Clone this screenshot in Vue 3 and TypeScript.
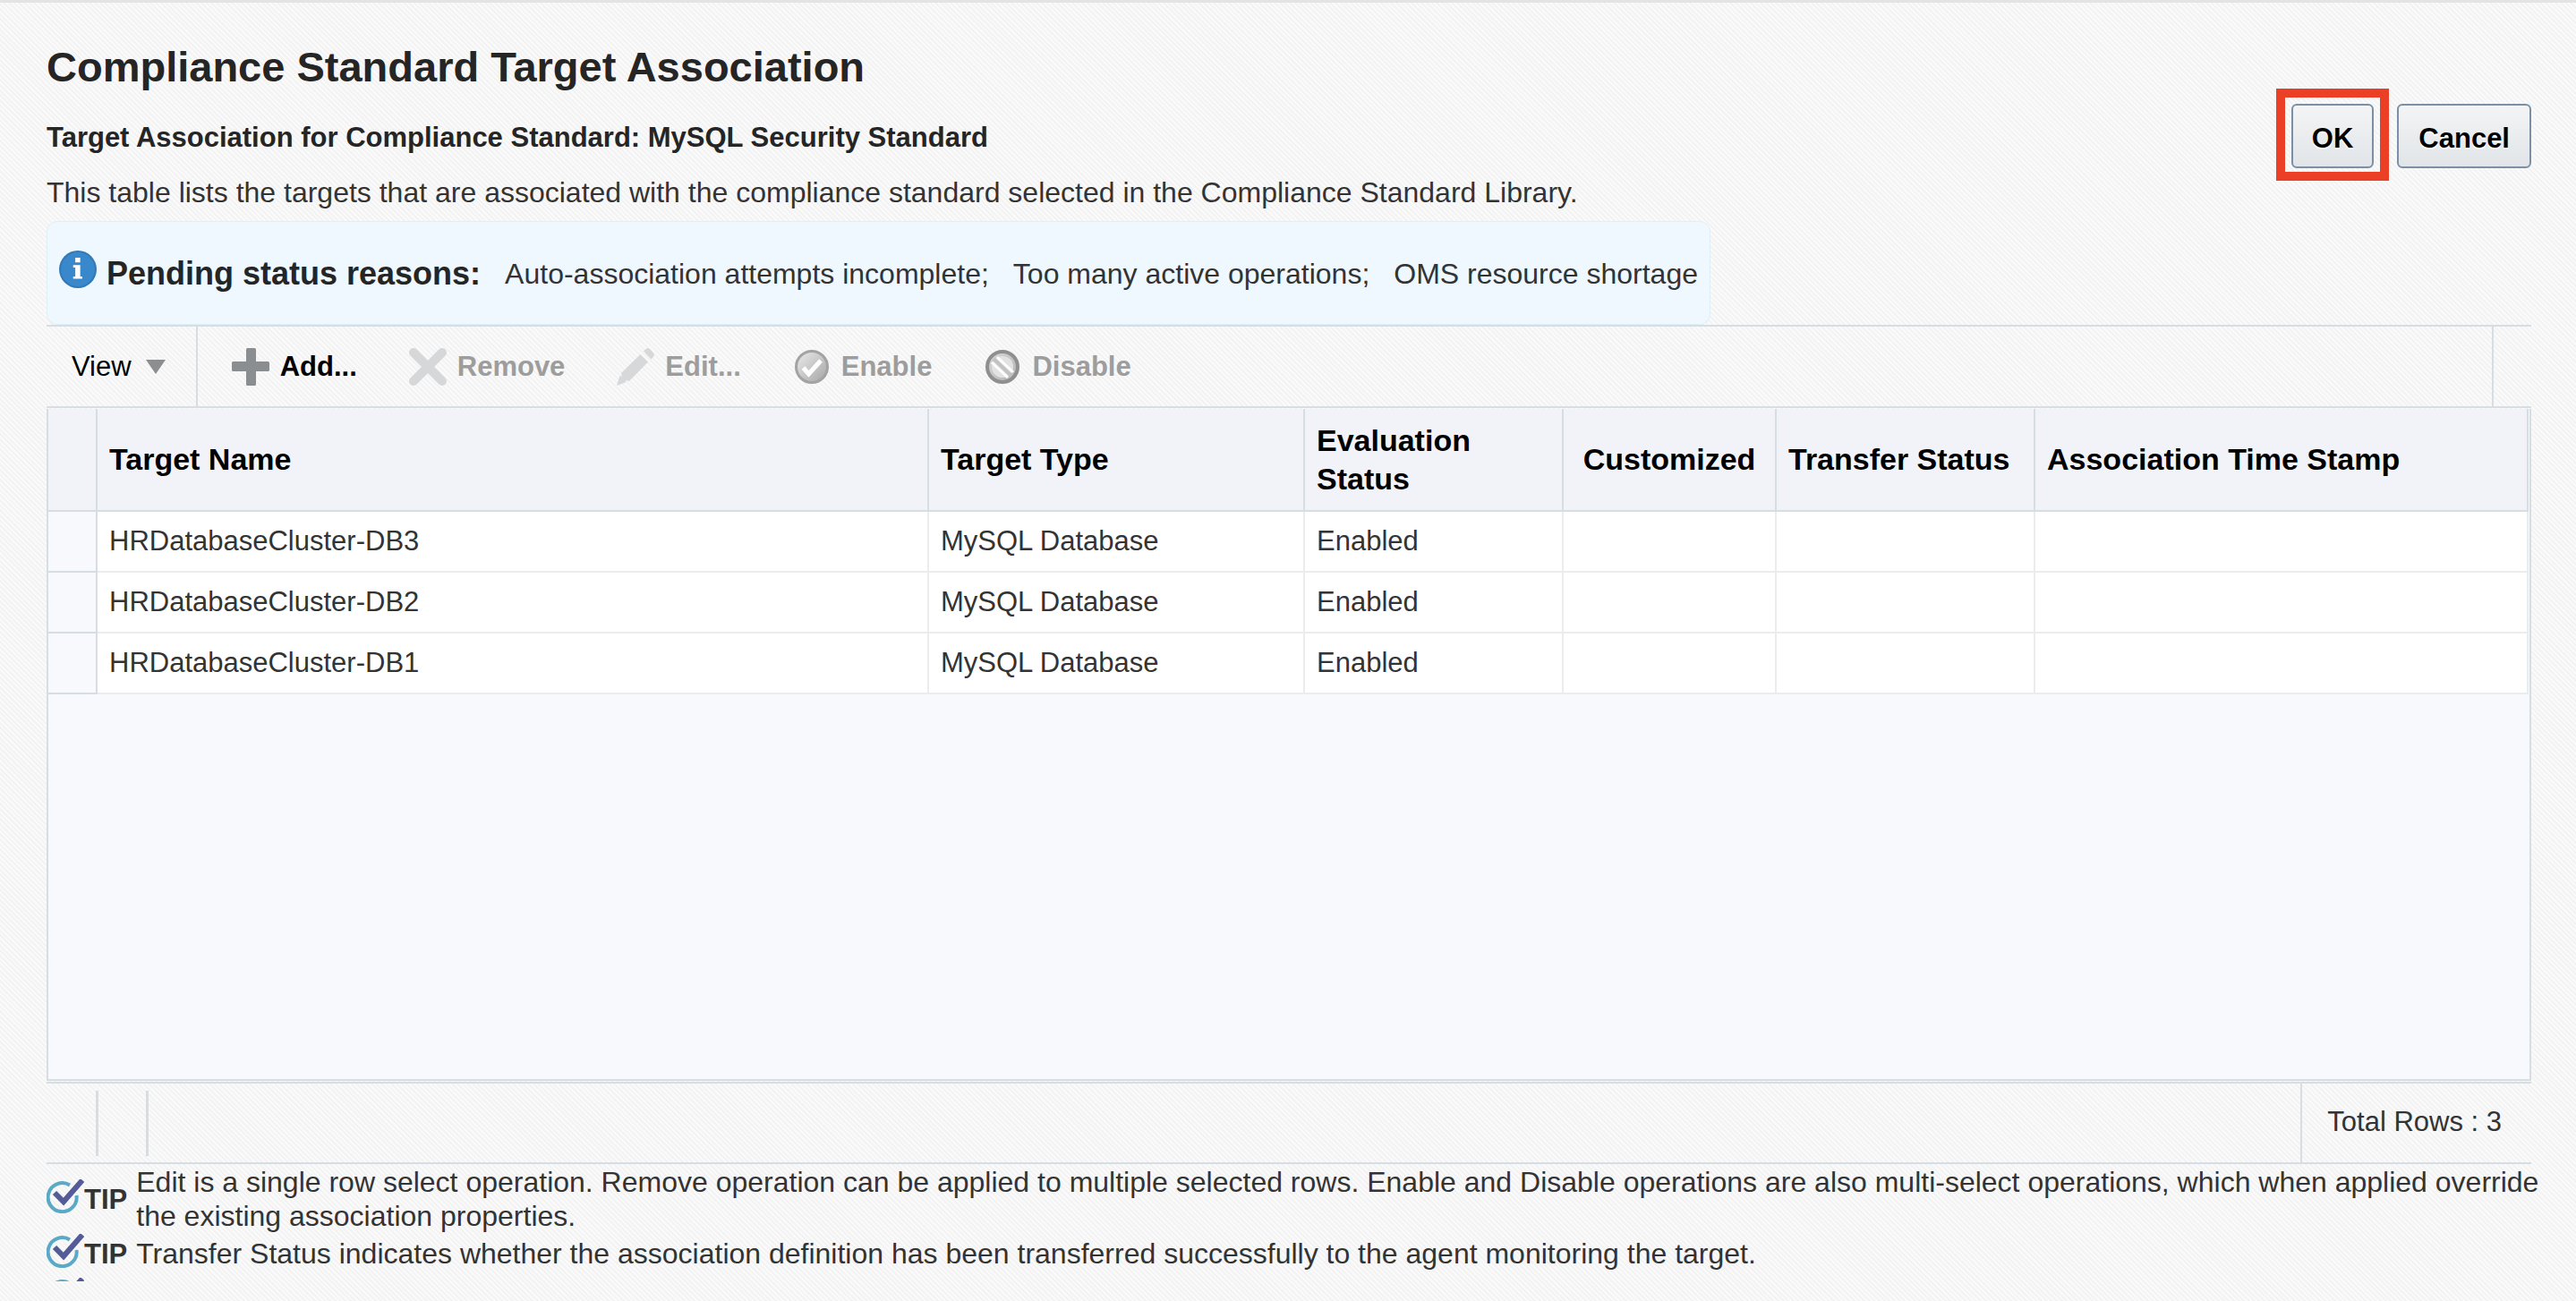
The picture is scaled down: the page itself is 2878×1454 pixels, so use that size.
<script setup lang="ts">
interface TargetRow {
  name: string
  type: string
  evaluation: string
}

const rows: TargetRow[] = [
  { name: 'HRDatabaseCluster-DB3', type: 'MySQL Database', evaluation: 'Enabled' },
  { name: 'HRDatabaseCluster-DB2', type: 'MySQL Database', evaluation: 'Enabled' },
  { name: 'HRDatabaseCluster-DB1', type: 'MySQL Database', evaluation: 'Enabled' },
]

const reasons: string[] = [
  'Auto-association attempts incomplete;',
  'Too many active operations;',
  'OMS resource shortage',
]

const tips: string[] = [
  'Edit is a single row select operation. Remove operation can be applied to multiple selected rows. Enable and Disable operations are also multi-select operations, which when applied override the existing association properties.',
  'Transfer Status indicates whether the association definition has been transferred successfully to the agent monitoring the target.',
]
</script>

<template>
  <main class="page">
    <header class="head">
      <div class="titles">
        <h1>Compliance Standard Target Association</h1>
        <h2>Target Association for Compliance Standard: MySQL Security Standard</h2>
        <p>This table lists the targets that are associated with the compliance standard selected in the Compliance Standard Library.</p>
      </div>
      <div class="actions">
        <span class="highlight"><button type="button" class="btn">OK</button></span>
        <button type="button" class="btn">Cancel</button>
      </div>
    </header>

    <section class="notice">
      <svg class="info" viewBox="0 0 16 16" aria-hidden="true">
        <circle cx="8" cy="8" r="8" fill="#3179b8" />
        <circle cx="8" cy="8" r="7.2" fill="#3a88cc" />
        <path fill="#fff" d="M6.9 3h2.1v2H6.9zM6 6.2h3v4.8h.9v1H6v-1h.9V7.2H6z" />
      </svg>
      <strong>Pending status reasons:</strong>
      <span v-for="reason in reasons" :key="reason" class="reason">{{ reason }}</span>
    </section>

    <div class="toolbar">
      <button type="button" class="tool view">
        View
        <svg class="caret" viewBox="0 0 22 16" aria-hidden="true"><path fill="#8b8f92" d="M0 0h22L11 16z" /></svg>
      </button>
      <div class="tools">
        <button type="button" class="tool">
          <svg class="icon" viewBox="0 0 42 42" aria-hidden="true"><path fill="#8a8e91" d="M16 1.5Q16 0 17.500 0h8Q27 0 27 1.500V15h13.500Q42 15 42 16.500v8Q42 26 40.500 26H27v14.500Q27 42 25.500 42h-8Q16 42 16 40.500V26H1.500Q0 26 0 24.500v-8Q0 15 1.500 15H16z" /></svg>
          Add...
        </button>
        <button type="button" class="tool" disabled>
          <svg class="icon" viewBox="0 0 42 42" aria-hidden="true"><path d="M5 5l32 32M37 5L5 37" stroke="#d6d7d8" stroke-width="10" stroke-linecap="round" /></svg>
          Remove
        </button>
        <button type="button" class="tool" disabled>
          <svg class="icon" viewBox="0 0 42 42" aria-hidden="true">
            <path fill="#d6d8d9" d="M26.500 7l8.500 8.500L14 37l-4-1-4-4-1-4zM30 3.500Q33 0 35 0q2 0 7 7 0 2-3.500 5.500z" />
            <path fill="#d6d8d9" d="M3.500 31l3 1 3 3 1 3L0 42z" />
          </svg>
          Edit...
        </button>
        <button type="button" class="tool" disabled>
          <svg class="icon" viewBox="0 0 42 42" aria-hidden="true">
            <defs>
              <linearGradient id="enable-face" x1="0" y1="0" x2="1" y2="1">
                <stop offset="0" stop-color="#ececec" />
                <stop offset="1" stop-color="#a4a4a4" />
              </linearGradient>
            </defs>
            <circle cx="21" cy="21" r="17.500" fill="url(#enable-face)" stroke="#a3a3a3" stroke-width="3" />
            <path d="M11.500 22l6 7L31 14" fill="none" stroke="#fff" stroke-width="5" />
          </svg>
          Enable
        </button>
        <button type="button" class="tool" disabled>
          <svg class="icon" viewBox="0 0 42 42" aria-hidden="true">
            <defs>
              <linearGradient id="disable-face" x1="0" y1="0" x2="1" y2="1">
                <stop offset="0" stop-color="#d9d9d9" />
                <stop offset="1" stop-color="#b2b2b2" />
              </linearGradient>
            </defs>
            <circle cx="21" cy="21" r="17" fill="url(#disable-face)" stroke="#8f8f8f" stroke-width="4" />
            <circle cx="21" cy="21" r="12" fill="#e2e2e2" />
            <path d="M11 12l20 19" stroke="#c2c2c2" stroke-width="4" />
            <path d="M15 10l18 17M9 16l18 17" stroke="#fff" stroke-width="3" />
          </svg>
          Disable
        </button>
      </div>
      <span class="tail" />
    </div>

    <div class="grid">
      <table>
        <colgroup>
          <col class="c-handle" />
          <col class="c-name" />
          <col class="c-type" />
          <col class="c-eval" />
          <col class="c-custom" />
          <col class="c-transfer" />
          <col />
        </colgroup>
        <thead>
          <tr>
            <th aria-label="Row"></th>
            <th scope="col">Target Name</th>
            <th scope="col">Target Type</th>
            <th scope="col">Evaluation Status</th>
            <th scope="col" class="center">Customized</th>
            <th scope="col">Transfer Status</th>
            <th scope="col">Association Time Stamp</th>
          </tr>
        </thead>
        <tbody>
          <tr v-for="row in rows" :key="row.name">
            <td class="handle"></td>
            <td>{{ row.name }}</td>
            <td>{{ row.type }}</td>
            <td>{{ row.evaluation }}</td>
            <td></td>
            <td></td>
            <td></td>
          </tr>
        </tbody>
      </table>
    </div>

    <footer class="status">
      <span class="divider" />
      <span class="divider" />
      <span class="total">Total Rows : 3</span>
    </footer>

    <section class="tips">
      <div v-for="tip in tips" :key="tip" class="tip">
        <svg class="tick" viewBox="0 0 42 38" aria-hidden="true">
          <path d="M26 6.500A16 16 0 1 0 33.500 18" fill="none" stroke="#5aa9c6" stroke-width="4" />
          <path d="M9 15l10 10L40 1" fill="none" stroke="#535c98" stroke-width="6" />
        </svg>
        <strong>TIP</strong>
        <p>{{ tip }}</p>
      </div>
      <div class="clipped">
        <svg class="tick" viewBox="0 0 42 38" aria-hidden="true">
          <path d="M26 6.500A16 16 0 1 0 33.500 18" fill="none" stroke="#5aa9c6" stroke-width="4" />
          <path d="M9 15l10 10L40 1" fill="none" stroke="#535c98" stroke-width="6" />
        </svg>
      </div>
    </section>
  </main>
</template>

<style>
body {
  background: #f8f8f8;
}
</style>

<style scoped>
* {
  box-sizing: border-box;
}

.page {
  display: flex;
  flex-direction: column;
  min-height: 100vh;
  padding: 44px 50px 22px 52px;
  border-top: 3px solid #e3e3e3;
  background: repeating-linear-gradient(45deg, #f3f3f3 0 2px, #fafafa 2px 4px);
  color: #333;
  font: 32px/38px "Liberation Sans", Arial, sans-serif;
}

h1,
h2,
p {
  margin: 0;
}

.head {
  display: flex;
  justify-content: space-between;
}

h1 {
  color: #252525;
  font-size: 47px;
  line-height: 56px;
}

h2 {
  margin-top: 32px;
  color: #252525;
  font-size: 31px;
  line-height: 38px;
}

.titles p {
  margin-top: 23px;
}

.actions {
  display: flex;
  align-items: flex-start;
  gap: 9px;
  margin-top: 52px;
}

.highlight {
  display: flex;
  padding: 7px 7px 4px;
  border: 10px solid #eb4026;
}

.btn {
  height: 72px;
  padding: 5px 22px 0;
  border: 2px solid #7b8fa6;
  border-radius: 6px;
  background: linear-gradient(#f3f4f5, #e1e5e8);
  color: #000;
  font: bold 31px/38px "Liberation Sans", Arial, sans-serif;
  text-shadow: 0 2px 0 #fff;
}

.highlight .btn {
  padding: 5px 21px 0;
}

.actions > .btn {
  margin-top: 17px;
}

.notice {
  display: flex;
  align-items: center;
  align-self: flex-start;
  height: 116px;
  margin-top: 13px;
  padding: 2px 13px 0;
  border: 1px solid #e0eef6;
  border-radius: 12px;
  background: #f0f8ff;
}

.notice strong {
  margin-left: 11px;
  color: #252525;
  font-size: 36px;
}

.reason {
  margin-left: 27px;
}

.info {
  width: 42px;
  height: 42px;
  margin-bottom: 10px;
}

.toolbar {
  display: flex;
  height: 93px;
  border-top: 2px solid #d6dde3;
  border-bottom: 2px solid #d6dde3;
}

.tool {
  display: flex;
  align-items: center;
  gap: 12px;
  padding: 0;
  border: 0;
  background: none;
  color: #000;
  font: bold 31px/38px "Liberation Sans", Arial, sans-serif;
  text-shadow: 0 2px 0 #fff;
}

.tool:disabled {
  color: #9d9d9d;
  text-shadow: none;
}

.view {
  gap: 16px;
  padding: 0 34px 0 28px;
  border-right: 2px solid #d6dde3;
  font-weight: normal;
}

.caret {
  width: 22px;
  height: 16px;
}

.tools {
  display: flex;
  flex: 1;
  gap: 58px;
  padding-left: 38px;
}

.icon {
  width: 42px;
  height: 42px;
}

.tail {
  width: 44px;
  border-left: 2px solid #d6dde3;
}

.grid {
  flex: 1;
  margin-top: 1px;
  border: 2px solid #d6dde3;
  border-top: 0;
  background: #f7f9fd;
}

table {
  width: calc(100% - 1px);
  border-collapse: separate;
  border-spacing: 0;
  table-layout: fixed;
}

.c-handle { width: 55px; }
.c-name { width: 929px; }
.c-type { width: 420px; }
.c-eval { width: 289px; }
.c-custom { width: 238px; }
.c-transfer { width: 289px; }

th {
  height: 115px;
  padding: 0 12px 0 13px;
  border-right: 2px solid #d6dde3;
  border-bottom: 2px solid #d6dde3;
  background: #f2f3f8;
  color: #000;
  font-size: 34px;
  line-height: 43px;
  text-align: left;
}

th.center {
  padding: 0;
  text-align: center;
}

td {
  height: 68px;
  padding: 0 13px;
  border-right: 2px solid #ebecee;
  border-bottom: 2px solid #ebecee;
  background: #fff;
  font-size: 31px;
}

td.handle {
  border-color: #d6dde3;
  background: #f7f9fd;
}

.status {
  display: flex;
  align-items: stretch;
  height: 92px;
  margin-top: 1px;
  border-top: 2px solid #d6dde3;
  border-bottom: 2px solid #d6dde3;
}

.divider {
  width: 56px;
  margin: 8px 0 7px;
  border-right: 3px solid #d6dde3;
}

.divider:first-child {
  width: 58px;
}

.total {
  margin-left: auto;
  padding: 24px 33px 0 28px;
  border-left: 2px solid #d6dde3;
  font-size: 31px;
}

/* The tip text runs a little into the page gutter. */
.tips {
  margin-right: -20px;
  padding-top: 1px;
}

.tip {
  display: flex;
  align-items: center;
  min-height: 46px;
}

.tip strong {
  margin: 2px 10px 0 0;
  font-size: 31px;
  line-height: 34px;
}

.tip p {
  flex: 1;
}

.tick {
  flex: none;
  width: 42px;
  height: 38px;
  margin-bottom: 6px;
}

.clipped {
  height: 8px;
  padding-top: 4px;
  overflow: hidden;
}
</style>
